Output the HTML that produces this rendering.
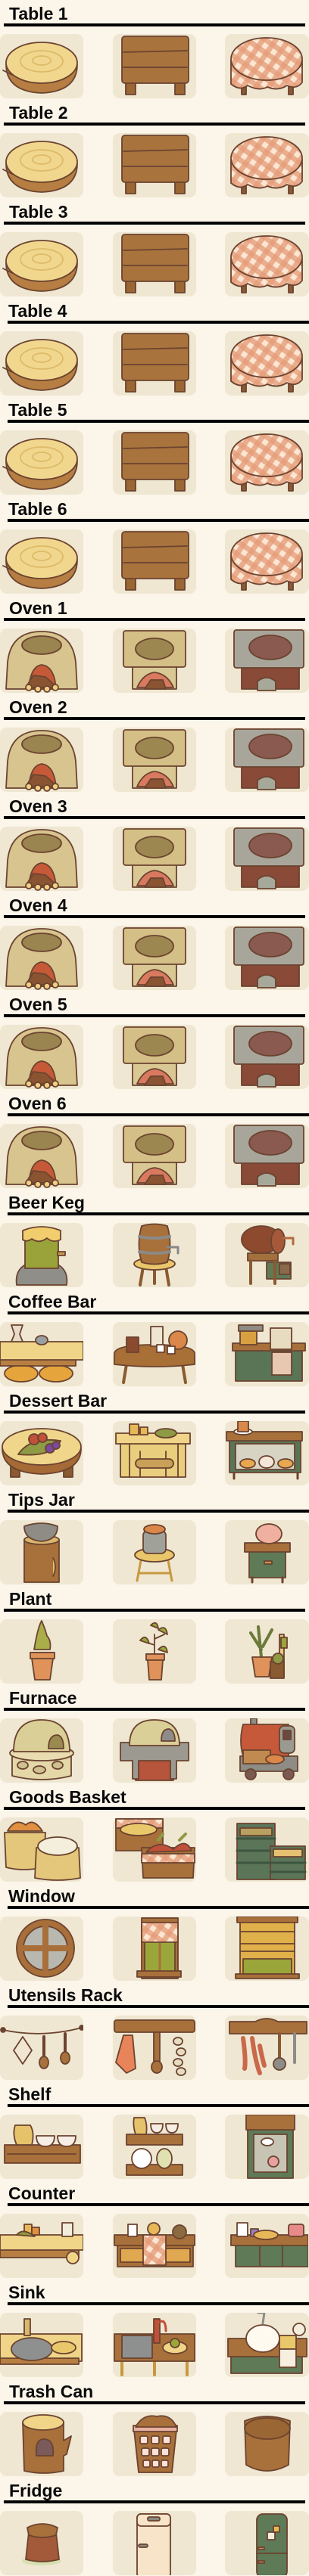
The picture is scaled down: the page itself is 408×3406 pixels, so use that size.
<!DOCTYPE html>
<html><head><meta charset="utf-8"><style>
*{margin:0;padding:0;box-sizing:border-box}
body{width:408px;height:3406px;background:#fbf5ea;position:relative;overflow:hidden;font-family:"Liberation Sans",Arial,sans-serif}
.s{position:absolute;left:0;width:408px;height:131px}
.h{position:absolute;top:7px;left:12px;font-size:23px;line-height:23px;font-weight:bold;color:#0a0a0a;white-space:nowrap}
.l{position:absolute;top:31px;left:5px;width:398px;height:4px;background:#000}
.sh .h{left:11px}.sh .l{left:10px}
.t{position:absolute;top:45px;width:110px;height:85px;background:#efe7d1;border-radius:9px}
.t svg{width:110px;height:85px;display:block}
.t svg *{stroke:#6b4330;stroke-width:1.8;stroke-linejoin:round;stroke-linecap:round}
.a{left:0}.b{left:149px}.c{left:297px;width:111px}
</style></head><body>
<svg width="0" height="0" style="position:absolute">
<defs>
<pattern id="ck" width="14" height="14" patternUnits="userSpaceOnUse" patternTransform="rotate(35)"><rect width="14" height="14" fill="#fbe6d2" style="stroke:none"/><rect width="7" height="14" fill="#e49a76" opacity=".75" style="stroke:none"/><rect width="14" height="7" fill="#e49a76" opacity=".75" style="stroke:none"/></pattern>
<symbol id="t1" viewBox="0 0 110 85"><path d="M8 40 Q8 76 55 78 Q102 76 102 40 Z" fill="#b67e42"/><path d="M4 48 L16 54" fill="none"/><ellipse cx="55" cy="38" rx="47" ry="27" fill="#f1d78e"/><ellipse cx="55" cy="36" rx="28" ry="14" fill="none" style="stroke:#dcba68"/><ellipse cx="55" cy="35" rx="12" ry="6" fill="none" style="stroke:#dcba68"/></symbol>
<symbol id="t2" viewBox="0 0 110 85"><rect x="17" y="62" width="13" height="18" fill="#9a6634"/><rect x="82" y="62" width="13" height="18" fill="#9a6634"/><rect x="12" y="3" width="88" height="62" rx="4" fill="#a8733d"/><path d="M14 24 L98 22 M14 44 L98 44" fill="none"/></symbol>
<symbol id="t3" viewBox="0 0 110 85"><rect x="22" y="66" width="6" height="14" fill="#8a5a35"/><rect x="84" y="66" width="6" height="14" fill="#8a5a35"/><path d="M8 35 L8 66 Q20 76 30 68 Q45 76 56 70 Q70 76 82 68 Q94 74 102 64 L102 35 Z" fill="url(#ck)"/><ellipse cx="55" cy="33" rx="47" ry="28" fill="url(#ck)"/></symbol>
<symbol id="o1" viewBox="0 0 110 85"><path d="M8 80 L10 45 Q14 4 55 4 Q96 4 100 45 L102 80 Z" fill="#d8c48e"/><ellipse cx="55" cy="22" rx="26" ry="12" fill="#9a8450"/><path d="M38 80 Q40 50 55 48 Q72 50 74 80 Z" fill="#c65a38"/><path d="M34 78 L44 62 L60 64 L76 78 Z" fill="#8a5432"/><circle cx="38" cy="78" r="4" fill="#f0d080"/><circle cx="50" cy="80" r="4" fill="#f0d080"/><circle cx="62" cy="80" r="4" fill="#f0d080"/><circle cx="73" cy="78" r="4" fill="#f0d080"/></symbol>
<symbol id="o2" viewBox="0 0 110 85"><rect x="26" y="48" width="58" height="32" fill="#d9c894"/><path d="M32 78 Q40 60 55 58 Q72 60 80 78 Z" fill="#d97a60"/><path d="M42 80 L50 68 L66 68 L70 80Z" fill="#8a5432"/><rect x="14" y="3" width="82" height="48" rx="3" fill="#d4bf86"/><ellipse cx="55" cy="27" rx="25" ry="14" fill="#9c8750"/></symbol>
<symbol id="o3" viewBox="0 0 110 85"><rect x="22" y="48" width="76" height="32" fill="#8a4a38"/><path d="M43 82 L43 70 Q55 60 67 70 L67 82Z" fill="#a6a89a"/><rect x="12" y="2" width="92" height="50" rx="3" fill="#a8a69a"/><ellipse cx="60" cy="25" rx="28" ry="16" fill="#8a5a50"/></symbol>
</defs></svg>

<!-- TABLES -->
<div class="s" style="top:0"><div class="h">Table 1</div><div class="l"></div><div class="t a"><svg><use href="#t1"/></svg></div><div class="t b"><svg><use href="#t2"/></svg></div><div class="t c"><svg><use href="#t3"/></svg></div></div>
<div class="s" style="top:131px"><div class="h">Table 2</div><div class="l"></div><div class="t a"><svg><use href="#t1"/></svg></div><div class="t b"><svg><use href="#t2"/></svg></div><div class="t c"><svg><use href="#t3"/></svg></div></div>
<div class="s" style="top:262px"><div class="h">Table 3</div><div class="l"></div><div class="t a"><svg><use href="#t1"/></svg></div><div class="t b"><svg><use href="#t2"/></svg></div><div class="t c"><svg><use href="#t3"/></svg></div></div>
<div class="s sh" style="top:393px"><div class="h">Table 4</div><div class="l"></div><div class="t a"><svg><use href="#t1"/></svg></div><div class="t b"><svg><use href="#t2"/></svg></div><div class="t c"><svg><use href="#t3"/></svg></div></div>
<div class="s sh" style="top:524px"><div class="h">Table 5</div><div class="l"></div><div class="t a"><svg><use href="#t1"/></svg></div><div class="t b"><svg><use href="#t2"/></svg></div><div class="t c"><svg><use href="#t3"/></svg></div></div>
<div class="s sh" style="top:655px"><div class="h">Table 6</div><div class="l"></div><div class="t a"><svg><use href="#t1"/></svg></div><div class="t b"><svg><use href="#t2"/></svg></div><div class="t c"><svg><use href="#t3"/></svg></div></div>
<!-- OVENS -->
<div class="s" style="top:786px"><div class="h">Oven 1</div><div class="l"></div><div class="t a"><svg><use href="#o1"/></svg></div><div class="t b"><svg><use href="#o2"/></svg></div><div class="t c"><svg><use href="#o3"/></svg></div></div>
<div class="s" style="top:917px"><div class="h">Oven 2</div><div class="l"></div><div class="t a"><svg><use href="#o1"/></svg></div><div class="t b"><svg><use href="#o2"/></svg></div><div class="t c"><svg><use href="#o3"/></svg></div></div>
<div class="s" style="top:1048px"><div class="h">Oven 3</div><div class="l"></div><div class="t a"><svg><use href="#o1"/></svg></div><div class="t b"><svg><use href="#o2"/></svg></div><div class="t c"><svg><use href="#o3"/></svg></div></div>
<div class="s" style="top:1179px"><div class="h">Oven 4</div><div class="l"></div><div class="t a"><svg><use href="#o1"/></svg></div><div class="t b"><svg><use href="#o2"/></svg></div><div class="t c"><svg><use href="#o3"/></svg></div></div>
<div class="s" style="top:1310px"><div class="h">Oven 5</div><div class="l"></div><div class="t a"><svg><use href="#o1"/></svg></div><div class="t b"><svg><use href="#o2"/></svg></div><div class="t c"><svg><use href="#o3"/></svg></div></div>
<div class="s sh" style="top:1441px"><div class="h">Oven 6</div><div class="l"></div><div class="t a"><svg><use href="#o1"/></svg></div><div class="t b"><svg><use href="#o2"/></svg></div><div class="t c"><svg><use href="#o3"/></svg></div></div>
<!-- BEER KEG -->
<div class="s sh" style="top:1572px"><div class="h">Beer Keg</div><div class="l"></div>
<div class="t a"><svg viewBox="0 0 110 85"><path d="M22 82 Q18 52 55 50 Q92 52 88 82 Z" fill="#8f8e88"/><rect x="33" y="14" width="44" height="46" fill="#9aa23a"/><rect x="76" y="38" width="10" height="5" fill="#c89a50"/><path d="M30 10 Q55 0 80 10 L80 22 Q70 27 62 20 Q52 28 42 21 Q35 26 30 22 Z" fill="#f1cd6e"/></svg></div>
<div class="t b"><svg viewBox="0 0 110 85"><path d="M40 58 L36 82 M70 58 L74 82 M55 62 L55 80" fill="none" style="stroke-width:4;stroke:#8a5a30"/><ellipse cx="55" cy="54" rx="27" ry="8" fill="#e8c66a"/><path d="M38 4 Q55 -1 72 4 Q79 28 72 52 Q55 57 38 52 Q31 28 38 4Z" fill="#a8703a"/><path d="M35 18 Q55 22 75 18 M35 38 Q55 42 75 38" fill="none" style="stroke:#8a8a86;stroke-width:4"/><path d="M72 32 L86 32 L86 40" fill="none" style="stroke:#888;stroke-width:3"/></svg></div>
<div class="t c"><svg viewBox="0 0 110 85"><rect x="55" y="52" width="32" height="22" fill="#5e7a56"/><rect x="30" y="40" width="40" height="10" fill="#a3703c"/><path d="M34 50 L34 80 M66 50 L66 80" fill="none" style="stroke-width:4;stroke:#8a5a30"/><ellipse cx="48" cy="22" rx="26" ry="18" fill="#8e4a2e"/><ellipse cx="70" cy="24" rx="9" ry="16" fill="#a5593a"/><rect x="72" y="54" width="14" height="14" fill="#8a6a4a"/><path d="M78 20 L90 20 L90 28" fill="none" style="stroke:#b36a40;stroke-width:3"/></svg></div></div>
<!-- COFFEE BAR -->
<div class="s sh" style="top:1703px"><div class="h">Coffee Bar</div><div class="l"></div>
<div class="t a"><svg viewBox="0 0 110 85"><ellipse cx="28" cy="68" rx="22" ry="11" fill="#e5a43c"/><ellipse cx="74" cy="68" rx="22" ry="11" fill="#e5a43c"/><rect x="0" y="48" width="100" height="10" fill="#b77f42"/><rect x="0" y="26" width="110" height="24" fill="#f0d488"/><path d="M15 4 L30 4 L26 16 L30 26 L15 26 L19 16Z" fill="#e6dcc8"/><ellipse cx="55" cy="24" rx="8" ry="6" fill="#9aa0a2"/></svg></div>
<div class="t b"><svg viewBox="0 0 110 85"><path d="M18 56 L14 80 M92 56 L96 80" fill="none" style="stroke-width:4;stroke:#8a5a30"/><path d="M2 42 Q2 30 55 30 Q108 30 108 42 L108 56 Q55 62 2 56Z" fill="#a86f36"/><rect x="18" y="20" width="16" height="20" fill="#8a4a30"/><rect x="50" y="6" width="16" height="26" fill="#efe6d2"/><circle cx="86" cy="24" r="12" fill="#d9884a"/><rect x="58" y="30" width="10" height="10" fill="#fff"/><rect x="72" y="32" width="10" height="10" fill="#fff"/></svg></div>
<div class="t c"><svg viewBox="0 0 110 85"><rect x="14" y="36" width="88" height="42" fill="#5a7556"/><rect x="10" y="28" width="96" height="10" fill="#a8703a"/><rect x="20" y="6" width="22" height="24" fill="#d8a040"/><path d="M18 4 L50 4 L50 12 L18 12Z" fill="#8e8c84"/><rect x="60" y="8" width="28" height="28" fill="#e8dcc0"/><rect x="62" y="40" width="26" height="30" fill="#e8c8b0"/></svg></div></div>
<!-- DESSERT BAR -->
<div class="s" style="top:1834px"><div class="h">Dessert Bar</div><div class="l"></div>
<div class="t a"><svg viewBox="0 0 110 85"><rect x="14" y="60" width="12" height="14" fill="#8a5a30"/><rect x="84" y="60" width="12" height="14" fill="#8a5a30"/><path d="M3 36 Q3 68 55 70 Q107 68 107 36Z" fill="#a56a36"/><ellipse cx="55" cy="34" rx="52" ry="24" fill="#efd68a"/><path d="M24 44 Q40 20 80 26 Q70 48 24 44Z" fill="#8e9a44"/><circle cx="45" cy="24" r="7" fill="#c0503a"/><circle cx="56" cy="22" r="6" fill="#c0503a"/><circle cx="66" cy="36" r="6" fill="#7a4aa0"/><circle cx="74" cy="32" r="5" fill="#7a4aa0"/></svg></div>
<div class="t b"><svg viewBox="0 0 110 85"><rect x="10" y="28" width="86" height="46" fill="#e9ce7e"/><path d="M22 28 V74 M36 40 V74 M70 40 V74 M86 28 V74" fill="none"/><rect x="30" y="50" width="50" height="12" rx="6" fill="#c9a058"/><rect x="4" y="16" width="98" height="14" fill="#f0d488"/><rect x="22" y="4" width="12" height="14" fill="#e8b858"/><rect x="36" y="8" width="10" height="10" fill="#e8b858"/><ellipse cx="70" cy="16" rx="14" ry="6" fill="#8e9a44"/></svg></div>
<div class="t c"><svg viewBox="0 0 110 85"><path d="M12 68 L12 76 M96 68 L96 76" fill="none" style="stroke-width:3"/><rect x="6" y="24" width="94" height="44" fill="#5a7556"/><rect x="14" y="30" width="78" height="34" fill="#d8d4c4"/><ellipse cx="30" cy="56" rx="10" ry="6" fill="#e8a850"/><ellipse cx="55" cy="54" rx="10" ry="8" fill="#f4e6d8"/><ellipse cx="80" cy="56" rx="10" ry="6" fill="#e8a850"/><rect x="2" y="14" width="100" height="12" fill="#a8703a"/><ellipse cx="24" cy="14" rx="12" ry="4" fill="#fff"/><rect x="17" y="0" width="14" height="14" fill="#d88a4a"/></svg></div></div>
<!-- TIPS JAR -->
<div class="s sh" style="top:1965px"><div class="h">Tips Jar</div><div class="l"></div>
<div class="t a"><svg viewBox="0 0 110 85"><rect x="32" y="26" width="46" height="56" fill="#a8703a"/><ellipse cx="55" cy="26" rx="23" ry="6" fill="#d8b86e"/><path d="M32 8 Q55 0 76 8 Q76 26 55 28 Q32 26 32 8Z" fill="#8e8c84"/><path d="M70 50 Q76 62 70 74" fill="#e8c06a"/></svg></div>
<div class="t b"><svg viewBox="0 0 110 85"><path d="M38 48 L32 80 M72 48 L78 80 M36 70 L74 70" fill="none" style="stroke-width:3;stroke:#c89840"/><ellipse cx="55" cy="46" rx="26" ry="9" fill="#eac66a"/><rect x="40" y="14" width="30" height="30" rx="6" fill="#a0a29a"/><ellipse cx="55" cy="12" rx="14" ry="6" fill="#d9884a"/></svg></div>
<div class="t c"><svg viewBox="0 0 110 85"><rect x="32" y="40" width="48" height="36" fill="#5e7a56"/><path d="M36 76 L36 82 M76 76 L76 82" fill="none" style="stroke-width:3"/><rect x="26" y="30" width="60" height="12" fill="#a8703a"/><ellipse cx="58" cy="18" rx="17" ry="13" fill="#f0b0a0"/><rect x="52" y="54" width="10" height="4" fill="#c89050"/></svg></div></div>
<!-- PLANT -->
<div class="s" style="top:2096px"><div class="h">Plant</div><div class="l"></div>
<div class="t a"><svg viewBox="0 0 110 85"><path d="M45 40 Q50 10 55 2 Q60 14 62 22 Q68 28 66 40Z" fill="#a9ae4a"/><path d="M40 44 L72 44 L70 52 L66 80 L46 80 L42 52Z" fill="#df925a"/><path d="M40 44 L72 44 L72 52 L40 52Z" fill="#df925a"/></svg></div>
<div class="t b"><svg viewBox="0 0 110 85"><path d="M55 46 L55 20 M55 34 L42 30 M55 26 L68 20" fill="none"/><path d="M36 28 Q44 18 48 32Z M60 14 Q70 6 72 20Z M50 8 Q58 0 60 12Z M60 40 Q70 30 72 44Z" fill="#9aa63a"/><path d="M44 46 L68 46 L66 54 L64 80 L48 80 L46 54Z" fill="#df925a"/><rect x="44" y="46" width="24" height="8" fill="#df925a"/></svg></div>
<div class="t c"><svg viewBox="0 0 110 85"><path d="M48 50 L44 10 M48 40 L34 18 M50 36 L62 14" fill="none" style="stroke:#6a7a3a;stroke-width:4"/><path d="M36 50 L62 50 L58 76 L40 76Z" fill="#df925a"/><rect x="72" y="20" width="6" height="56" fill="#e8c880"/><rect x="60" y="56" width="18" height="22" fill="#8a5a30"/><circle cx="70" cy="52" r="7" fill="#8e9a44"/><rect x="74" y="24" width="8" height="14" fill="#9aa63a"/></svg></div></div>
<!-- FURNACE -->
<div class="s" style="top:2227px"><div class="h">Furnace</div><div class="l"></div>
<div class="t a"><svg viewBox="0 0 110 85"><path d="M16 46 L16 76 Q55 86 94 76 L94 46Z" fill="#e4d7a8"/><ellipse cx="30" cy="62" rx="7" ry="5" fill="#cfc090"/><ellipse cx="52" cy="68" rx="8" ry="5" fill="#cfc090"/><ellipse cx="76" cy="62" rx="7" ry="5" fill="#cfc090"/><ellipse cx="55" cy="46" rx="42" ry="10" fill="#e8dcb0"/><path d="M18 44 Q18 2 55 2 Q92 2 92 44Z" fill="#dbcf98"/><path d="M64 40 Q64 22 76 22 Q84 24 84 40Z" fill="#9a8a50"/></svg></div>
<div class="t b"><svg viewBox="0 0 110 85"><rect x="30" y="52" width="50" height="30" fill="#b6553c"/><path d="M10 32 L100 32 L100 56 L84 56 L84 80 L76 80 L76 56 L34 56 L34 80 L26 80 L26 56 L10 56Z" fill="#9c9a90"/><path d="M22 36 Q22 2 55 2 Q88 2 88 36Z" fill="#dbcf98"/><path d="M64 30 Q64 14 74 14 Q82 16 82 30Z" fill="#8e8c88"/></svg></div>
<div class="t c"><svg viewBox="0 0 110 85"><rect x="34" y="0" width="8" height="8" fill="#8e8c88"/><path d="M20 50 L96 50 L96 70 L20 70Z" fill="#8e8c84"/><circle cx="34" cy="74" r="7" fill="#7a5a50"/><circle cx="84" cy="74" r="7" fill="#7a5a50"/><path d="M24 8 L84 8 L84 50 L24 50 Q18 30 24 8Z" fill="#c5593a"/><rect x="72" y="10" width="20" height="36" rx="6" fill="#9a9a92"/><rect x="77" y="16" width="10" height="12" fill="#6a4a40"/><rect x="24" y="42" width="36" height="18" fill="#c08a50"/><ellipse cx="66" cy="54" rx="12" ry="6" fill="#d9884a"/></svg></div></div>
<!-- GOODS BASKET -->
<div class="s" style="top:2358px"><div class="h">Goods Basket</div><div class="l"></div>
<div class="t a"><svg viewBox="0 0 110 85"><path d="M6 20 L60 20 L58 66 Q30 72 8 66Z" fill="#e4c77a"/><path d="M10 18 Q20 0 34 10 Q44 0 56 18Z" fill="#e09040"/><path d="M48 40 L104 40 L106 80 Q76 86 46 80Z" fill="#e4c77a"/><ellipse cx="76" cy="38" rx="26" ry="12" fill="#f4eedc"/></svg></div>
<div class="t b"><svg viewBox="0 0 110 85"><rect x="4" y="2" width="62" height="42" fill="#a8703a"/><rect x="4" y="2" width="62" height="12" fill="url(#ck)"/><ellipse cx="34" cy="16" rx="24" ry="8" fill="#e8c86a"/><path d="M38 40 L108 40 L106 80 L40 80Z" fill="#a8703a"/><rect x="38" y="48" width="70" height="12" fill="url(#ck)"/><path d="M44 46 Q60 28 80 42 Q96 26 104 44Z" fill="#c0503a"/><path d="M60 30 L66 22 M88 30 L96 22" fill="none" style="stroke:#8e9a44;stroke-width:4"/></svg></div>
<div class="t c"><svg viewBox="0 0 110 85"><rect x="16" y="8" width="50" height="74" fill="#5b7558"/><rect x="20" y="14" width="42" height="10" fill="#b8a060"/><path d="M16 28 H66 M16 44 H66 M16 60 H66" fill="none" style="stroke:#3e5540;stroke-width:3"/><rect x="60" y="38" width="46" height="44" fill="#5b7558"/><rect x="64" y="42" width="38" height="10" fill="#e4c070"/><path d="M60 60 H106 M60 72 H106" fill="none" style="stroke:#3e5540;stroke-width:3"/></svg></div></div>
<!-- WINDOW -->
<div class="s sh" style="top:2489px"><div class="h">Window</div><div class="l"></div>
<div class="t a"><svg viewBox="0 0 110 85"><circle cx="60" cy="42" r="38" fill="#a86f3a"/><circle cx="60" cy="42" r="29" fill="#b8b8b0"/><path d="M60 13 V71 M31 42 H89" fill="none" style="stroke:#a86f3a;stroke-width:8"/></svg></div>
<div class="t b"><svg viewBox="0 0 110 85"><rect x="38" y="2" width="48" height="80" fill="#a8703a"/><rect x="42" y="30" width="40" height="44" fill="#9aa63a"/><path d="M62 30 V74" fill="none" style="stroke:#a8703a;stroke-width:3"/><rect x="38" y="8" width="48" height="26" fill="url(#ck)"/><rect x="32" y="72" width="58" height="8" fill="#a8703a"/></svg></div>
<div class="t c"><svg viewBox="0 0 110 85"><rect x="20" y="2" width="72" height="78" fill="#e0b04a"/><rect x="24" y="56" width="64" height="20" fill="#9aa63a"/><path d="M20 20 H92 M20 36 H92 M20 46 H92" fill="none"/><rect x="16" y="0" width="80" height="8" fill="#a8703a"/><rect x="14" y="76" width="84" height="6" fill="#a8703a"/></svg></div></div>
<!-- UTENSILS RACK -->
<div class="s sh" style="top:2620px"><div class="h">Utensils Rack</div><div class="l"></div>
<div class="t a"><svg viewBox="0 0 110 85"><path d="M4 19 Q55 30 108 16" fill="none"/><circle cx="4" cy="19" r="3" fill="#6b4330"/><circle cx="108" cy="16" r="3" fill="#6b4330"/><path d="M30 28 L42 46 L30 64 L18 46Z" fill="#f0e6d2"/><path d="M58 28 V56" fill="none" style="stroke-width:4"/><ellipse cx="58" cy="62" rx="6" ry="8" fill="#a8703a"/><path d="M86 24 V50" fill="none" style="stroke-width:4"/><ellipse cx="86" cy="56" rx="6" ry="8" fill="#a8703a"/></svg></div>
<div class="t b"><svg viewBox="0 0 110 85"><rect x="2" y="6" width="106" height="16" rx="3" fill="#a8703a"/><path d="M14 26 L26 26 L30 70 L18 76 L4 62Z" fill="#e8845a"/><rect x="54" y="22" width="8" height="44" fill="#a8703a"/><ellipse cx="58" cy="68" rx="7" ry="8" fill="#a8703a"/><ellipse cx="86" cy="34" rx="6" ry="5" fill="#e8dcc0"/><ellipse cx="90" cy="48" rx="6" ry="5" fill="#e8dcc0"/><ellipse cx="86" cy="62" rx="6" ry="5" fill="#e8dcc0"/><ellipse cx="90" cy="74" rx="6" ry="5" fill="#e8dcc0"/></svg></div>
<div class="t c"><svg viewBox="0 0 110 85"><path d="M6 8 L40 8 Q55 0 70 8 L108 8 L108 24 L6 24Z" fill="#a8703a"/><path d="M24 30 Q28 60 26 70 M36 30 Q40 60 46 76 M46 40 Q50 60 52 66" fill="none" style="stroke:#c9684a;stroke-width:6"/><path d="M72 24 V58" fill="none" style="stroke:#8a5a30;stroke-width:4"/><circle cx="72" cy="64" r="8" fill="#8e8c88"/><path d="M92 24 V62" fill="none" style="stroke:#8e8c88;stroke-width:4"/></svg></div></div>
<!-- SHELF -->
<div class="s sh" style="top:2751px"><div class="h">Shelf</div><div class="l"></div>
<div class="t a"><svg viewBox="0 0 110 85"><rect x="6" y="40" width="100" height="24" fill="#a8703a"/><path d="M10 52 H100" fill="none"/><path d="M20 14 L40 14 Q46 24 42 40 L22 40 Q16 26 20 14Z" fill="#e6c26a"/><path d="M48 28 L72 28 Q72 42 60 42 Q48 42 48 28Z" fill="#f6eee4"/><path d="M76 28 L100 28 Q100 42 88 42 Q76 42 76 28Z" fill="#f6eee4"/></svg></div>
<div class="t b"><svg viewBox="0 0 110 85"><rect x="18" y="26" width="74" height="14" fill="#a8703a"/><rect x="18" y="66" width="74" height="14" fill="#a8703a"/><path d="M28 4 L42 4 Q46 14 44 26 L30 26 Q26 14 28 4Z" fill="#e6c26a"/><path d="M50 12 L66 12 Q66 24 58 24 Q50 24 50 12Z" fill="#f6eee4"/><path d="M70 12 L86 12 Q86 24 78 24 Q70 24 70 12Z" fill="#f6eee4"/><circle cx="38" cy="58" r="13" fill="#fff"/><ellipse cx="68" cy="58" rx="10" ry="13" fill="#dfe2b0"/></svg></div>
<div class="t c"><svg viewBox="0 0 110 85"><rect x="30" y="18" width="60" height="66" fill="#5e7a56"/><rect x="38" y="26" width="44" height="50" fill="#c8c4b4"/><rect x="28" y="0" width="64" height="20" fill="#a8703a"/><ellipse cx="56" cy="36" rx="8" ry="5" fill="#fff"/><circle cx="64" cy="62" r="7" fill="#e8a0a0"/></svg></div></div>
<!-- COUNTER -->
<div class="s sh" style="top:2882px"><div class="h">Counter</div><div class="l"></div>
<div class="t a"><svg viewBox="0 0 110 85"><rect x="0" y="46" width="104" height="12" fill="#b77f42"/><rect x="0" y="28" width="110" height="20" fill="#f0d488"/><ellipse cx="96" cy="58" rx="8" ry="8" fill="#f0d488"/><rect x="32" y="14" width="10" height="14" fill="#e8b858"/><rect x="42" y="18" width="10" height="10" fill="#e09040"/><path d="M22 28 Q30 18 46 30Z" fill="#8e9a44"/><rect x="82" y="12" width="14" height="18" fill="#f2ecdc"/></svg></div>
<div class="t b"><svg viewBox="0 0 110 85"><rect x="6" y="40" width="100" height="30" fill="#a8703a"/><rect x="10" y="46" width="92" height="18" fill="#e0a850"/><rect x="2" y="28" width="106" height="14" fill="#a8703a"/><rect x="40" y="28" width="30" height="40" fill="url(#ck)"/><rect x="20" y="14" width="12" height="16" fill="#fff"/><circle cx="54" cy="20" r="8" fill="#e8b858"/><circle cx="88" cy="24" r="9" fill="#8a6a40"/></svg></div>
<div class="t c"><svg viewBox="0 0 110 85"><rect x="14" y="40" width="96" height="30" fill="#5e7a56"/><path d="M46 40 V70 M76 40 V70" fill="none"/><rect x="8" y="28" width="102" height="14" fill="#a8703a"/><rect x="16" y="12" width="14" height="18" fill="#fff"/><rect x="34" y="20" width="10" height="10" fill="#9a80c0"/><ellipse cx="54" cy="28" rx="16" ry="6" fill="#e8b858"/><rect x="84" y="14" width="20" height="16" rx="3" fill="#e88a8a"/></svg></div></div>
<!-- SINK -->
<div class="s sh" style="top:3013px"><div class="h">Sink</div><div class="l"></div>
<div class="t a"><svg viewBox="0 0 110 85"><path d="M0 28 L108 28 L108 64 L0 64Z" fill="#f0d488"/><rect x="0" y="60" width="104" height="8" fill="#b77f42"/><ellipse cx="42" cy="48" rx="27" ry="15" fill="#8e9090"/><rect x="32" y="8" width="8" height="22" fill="#d8b86e"/><ellipse cx="84" cy="46" rx="16" ry="8" fill="#e8c86a"/></svg></div>
<div class="t b"><svg viewBox="0 0 110 85"><path d="M12 60 V82 M55 60 V82 M98 60 V82" fill="none" style="stroke-width:4;stroke:#c89840"/><rect x="2" y="28" width="106" height="36" fill="#a8703a"/><rect x="12" y="30" width="40" height="30" fill="#8e9090"/><rect x="54" y="8" width="8" height="32" fill="#c0503a"/><path d="M62 12 Q70 8 70 24" fill="none" style="stroke:#c0503a;stroke-width:3"/><ellipse cx="82" cy="46" rx="16" ry="8" fill="#f0d488"/><circle cx="82" cy="40" r="6" fill="#9aa63a"/></svg></div>
<div class="t c"><svg viewBox="0 0 110 85"><rect x="8" y="56" width="94" height="24" fill="#5e7a56"/><rect x="4" y="34" width="104" height="24" fill="#a8703a"/><ellipse cx="50" cy="34" rx="22" ry="18" fill="#fffaf0"/><path d="M44 0 L52 0 L50 14" fill="none" style="stroke:#8e8c88;stroke-width:3"/><rect x="72" y="30" width="22" height="18" fill="#e8c86a"/><rect x="72" y="48" width="22" height="24" fill="#f6eede"/><circle cx="98" cy="22" r="8" fill="#f4ecdc"/></svg></div></div>
<!-- TRASH CAN -->
<div class="s" style="top:3144px"><div class="h">Trash Can</div><div class="l"></div>
<div class="t a"><svg viewBox="0 0 110 85"><path d="M30 14 L84 14 L84 38 L94 32 L88 56 L84 58 L84 78 Q58 84 32 78Z" fill="#a8703a"/><ellipse cx="57" cy="14" rx="27" ry="10" fill="#f0d488"/><path d="M48 58 Q46 36 58 36 Q72 36 70 58Z" fill="#7a5a5a"/></svg></div>
<div class="t b"><svg viewBox="0 0 110 85"><path d="M28 24 L84 24 L78 80 L34 80Z" fill="#a8703a"/><rect x="27" y="18" width="58" height="8" fill="#e8b0a0"/><path d="M30 20 Q40 2 58 6 Q76 2 84 20Z" fill="#a8703a"/><rect x="36" y="32" width="10" height="10" rx="2" fill="#fde0d8"/><rect x="51" y="32" width="10" height="10" rx="2" fill="#fde0d8"/><rect x="66" y="32" width="10" height="10" rx="2" fill="#fde0d8"/><rect x="38" y="48" width="10" height="10" rx="2" fill="#fde0d8"/><rect x="51" y="48" width="10" height="10" rx="2" fill="#fde0d8"/><rect x="64" y="48" width="10" height="10" rx="2" fill="#fde0d8"/><rect x="40" y="64" width="9" height="9" rx="2" fill="#fde0d8"/><rect x="52" y="64" width="9" height="9" rx="2" fill="#fde0d8"/><rect x="64" y="64" width="9" height="9" rx="2" fill="#fde0d8"/></svg></div>
<div class="t c"><svg viewBox="0 0 110 85"><path d="M26 12 Q55 0 86 12 L84 70 Q55 86 28 70Z" fill="#a8703a"/><ellipse cx="56" cy="22" rx="30" ry="14" fill="#9a6634"/></svg></div></div>
<!-- FRIDGE -->
<div class="s" style="top:3275px"><div class="h">Fridge</div><div class="l"></div>
<div class="t a"><svg viewBox="0 0 110 85"><ellipse cx="55" cy="66" rx="26" ry="6" fill="#d8e0b0" style="stroke:none"/><path d="M38 28 L74 28 L78 64 Q56 70 34 64Z" fill="#a35a3a"/><path d="M36 22 Q56 12 76 22 L74 32 Q56 38 38 32Z" fill="#a8703a"/></svg></div>
<div class="t b"><svg viewBox="0 0 110 85"><rect x="32" y="4" width="44" height="84" rx="5" fill="#f8e4c8"/><rect x="32" y="4" width="44" height="16" rx="5" fill="#f8e4c8"/><rect x="46" y="8" width="16" height="5" rx="2" fill="#8a8a80"/><rect x="34" y="44" width="12" height="4" rx="2" fill="#8a8a80"/></svg></div>
<div class="t c"><svg viewBox="0 0 110 85"><rect x="42" y="4" width="40" height="84" rx="8" fill="#5e7a56"/><path d="M42 56 H82" fill="none"/><rect x="56" y="28" width="10" height="10" fill="#f4eedc"/><rect x="64" y="20" width="8" height="8" fill="#e8b858"/><rect x="44" y="48" width="8" height="3" fill="#d09050"/><rect x="44" y="66" width="8" height="3" fill="#d09050"/></svg></div></div>
</body></html>
